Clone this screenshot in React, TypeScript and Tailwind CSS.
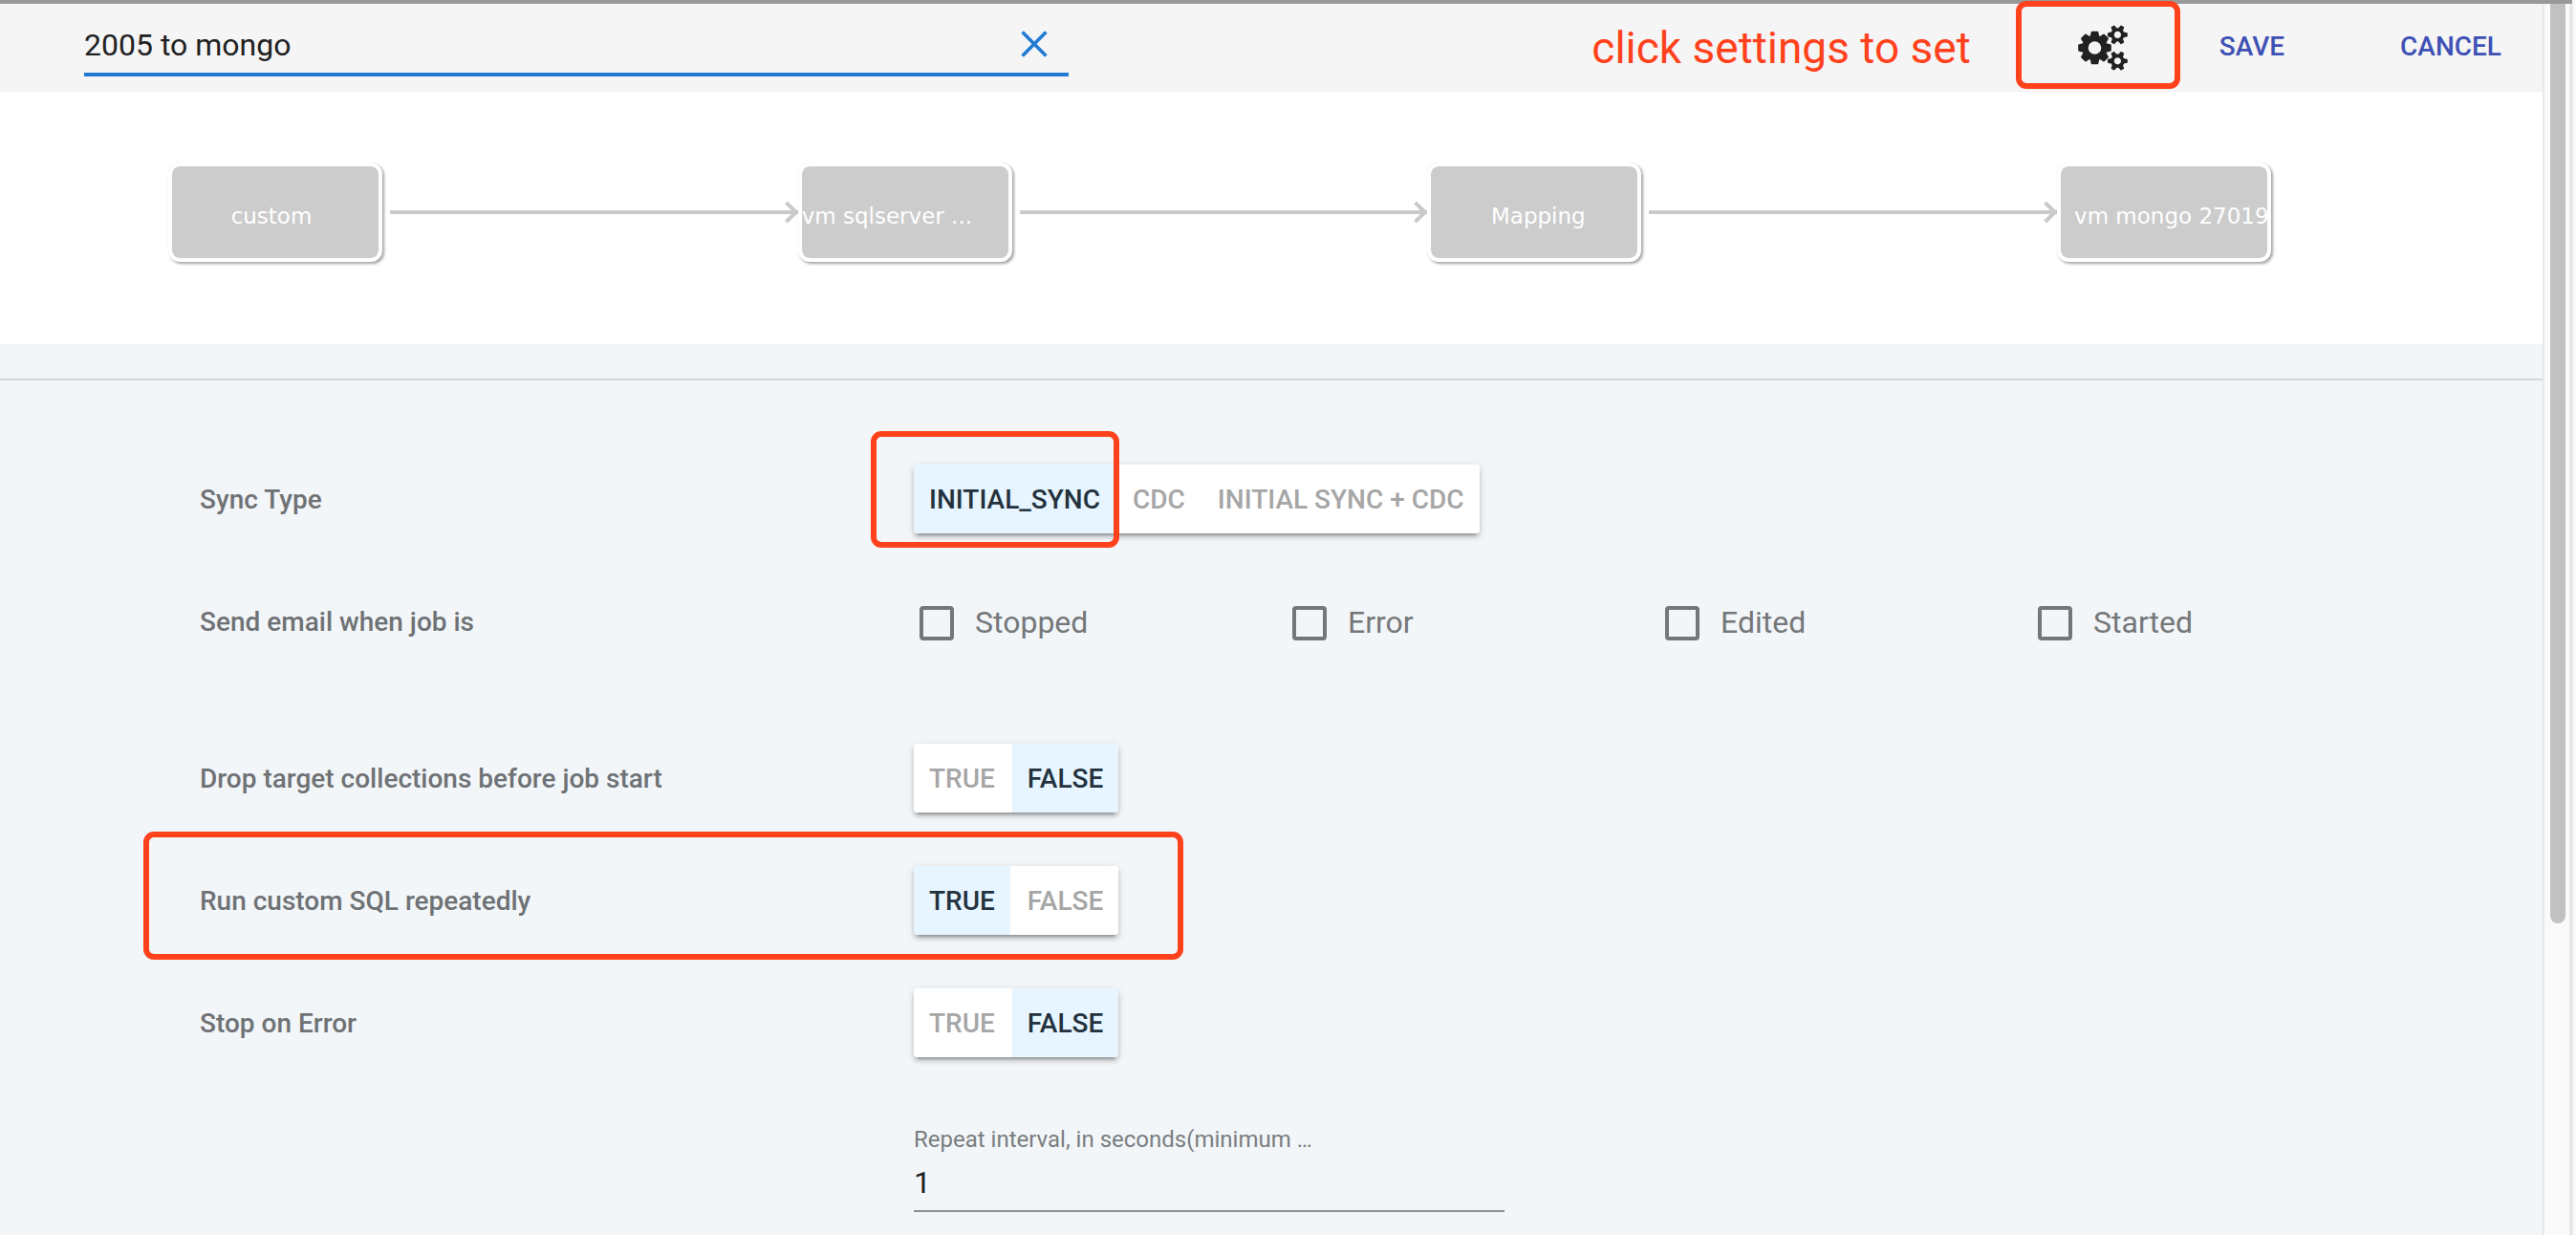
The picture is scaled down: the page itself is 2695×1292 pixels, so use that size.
import { useState } from "react";
import type { ReactNode } from "react";

type FlowNode = { label: string; align: string };

const NODES: FlowNode[] = [
  { label: "custom", align: "pr-2 text-center" },
  { label: "vm sqlserver ...", align: "text-left" },
  { label: "Mapping", align: "pl-2 text-center" },
  { label: "vm mongo 27019", align: "pl-3.5 text-left" },
];

const EMAIL_EVENTS = ["Stopped", "Error", "Edited", "Started"];

const BIG_TEETH = [0, 45, 90, 135, 180, 225, 270, 315];
const SMALL_TEETH = [30, 90, 150, 210, 270, 330];

function GearsIcon() {
  return (
    <svg viewBox="0 0 52 48" className="h-12 w-[52px]" fill="#212121" aria-hidden="true">
      <g transform="translate(17.5 24)">
        {BIG_TEETH.map((a) => (
          <path
            key={a}
            transform={`rotate(${a})`}
            d="M-5 -11 L-3.8 -16.4 Q-3.5 -17.3 -2.6 -17.3 H2.6 Q3.5 -17.3 3.8 -16.4 L5 -11 Z"
          />
        ))}
        <circle r="10" fill="none" stroke="#212121" strokeWidth="6.4" />
      </g>
      {[10.4, 37.8].map((cy) => (
        <g key={cy} transform={`translate(41.4 ${cy})`}>
          {SMALL_TEETH.map((a) => (
            <path
              key={a}
              transform={`rotate(${a})`}
              d="M-2.8 -6 L-2.1 -9.8 Q-2 -10.4 -1.4 -10.4 H1.4 Q2 -10.4 2.1 -9.8 L2.8 -6 Z"
            />
          ))}
          <circle r="5.4" fill="none" stroke="#212121" strokeWidth="3.6" />
        </g>
      ))}
    </svg>
  );
}

function Highlight({ className }: { className: string }) {
  return (
    <span
      aria-hidden="true"
      className={`pointer-events-none absolute z-10 rounded-[11px] border-6 border-[#ff421c] ${className}`}
    />
  );
}

function Connector() {
  return (
    <div className="flex flex-1 items-center pl-2">
      <div className="h-1 flex-1 bg-[#cacaca]" />
      <svg viewBox="0 0 12 24" className="-ml-3 h-6 w-3 overflow-visible" fill="none" stroke="#cacaca" strokeWidth="4" aria-hidden="true">
        <path d="M-0.5 2 L10 12 L-0.5 22" />
      </svg>
    </div>
  );
}

function Toggle({
  label,
  options,
  initial,
  highlightFirst = false,
}: {
  label: string;
  options: string[];
  initial: string;
  highlightFirst?: boolean;
}) {
  const [value, setValue] = useState(initial);
  return (
    <div
      role="group"
      aria-label={label}
      className="flex h-18 w-fit gap-0.5 rounded bg-white shadow-[0_6px_2px_-4px_rgba(0,0,0,0.2),0_4px_4px_rgba(0,0,0,0.16),0_2px_10px_rgba(0,0,0,0.12)]"
    >
      {options.map((option, i) => (
        <div key={option} className="relative flex">
          <button
            type="button"
            aria-pressed={option === value}
            onClick={() => setValue(option)}
            className={`px-4 pt-0.5 text-[28px] font-medium ${i === 0 ? "rounded-l" : ""} ${
              i === options.length - 1 ? "rounded-r" : ""
            } ${option === value ? "bg-[#e6f5ff] text-[#24323d]" : "bg-white text-[#a6a6a6]"}`}
          >
            {option}
          </button>
          {highlightFirst && i === 0 && <Highlight className="-top-[35px] -right-1 -bottom-[15px] -left-[45px]" />}
        </div>
      ))}
    </div>
  );
}

function Row({ label, children }: { label: string; children: ReactNode }) {
  return (
    <div className="grid min-h-18 grid-cols-[minmax(0,83fr)_minmax(0,174fr)] items-center">
      <span className="pt-0.5 text-[28px] font-medium text-[#6f7275]">{label}</span>
      {children}
    </div>
  );
}

export default function App() {
  const [name, setName] = useState("2005 to mongo");
  const [interval, setIntervalValue] = useState("1");

  return (
    <div className="flex min-h-screen flex-col bg-[#fafafa] font-['Roboto',sans-serif]">
      <div className="mr-1 h-1 bg-[#999999]" />
      <div className="flex flex-1">
        <main className="flex min-w-0 flex-1 flex-col bg-[#f2f6f9]">
          <header className="flex h-23 items-center bg-[#f5f5f5] pr-[43px] pl-22">
            <div className="mb-4 flex h-[62px] w-[1030px] shrink items-center self-end border-b-4 border-[#217bd4] pr-[22px]">
              <input
                aria-label="Job name"
                value={name}
                onChange={(e) => setName(e.target.value)}
                className="min-w-0 flex-1 bg-transparent text-[32px] text-[#212121] outline-none"
              />
              <button type="button" aria-label="Clear name" className="pb-0.5" onClick={() => setName("")}>
                <svg viewBox="0 0 28 28" className="size-7" fill="none" stroke="#217bd4" strokeWidth="3.6" aria-hidden="true">
                  <path d="M1.6 1.6 L26.4 26.4 M26.4 1.6 L1.6 26.4" />
                </svg>
              </button>
            </div>
            <span className="ml-auto text-[46px] leading-none whitespace-nowrap text-[#ff421c]">click settings to set</span>
            <div className="relative ml-28 shrink-0">
              <button type="button" aria-label="Settings" className="block">
                <GearsIcon />
              </button>
              <Highlight className="-top-[25px] -right-[55px] -bottom-[19px] -left-[65px]" />
            </div>
            <div className="ml-24 flex gap-[121px] pb-0.5 text-[28px] font-medium text-[#3f51b5]">
              <button type="button">SAVE</button>
              <button type="button">CANCEL</button>
            </div>
          </header>

          <section aria-label="Job flow" className="flex h-66 bg-white pt-[74px] pr-71 pb-[86px] pl-44">
            {NODES.map((node, i) => (
              <div key={node.label} className={i === 0 ? "flex" : "flex flex-1"}>
                {i > 0 && <Connector />}
                <div className="flex w-56 items-center overflow-hidden rounded-xl border-4 border-white bg-[#cccccc] bg-clip-padding pt-2 font-['DejaVu_Sans',sans-serif] text-[23px] text-white shadow-[2px_2px_3px_rgba(0,0,0,0.35),0_0_1px_rgba(0,0,0,0.15)]">
                  <span className={`flex-1 whitespace-nowrap ${node.align}`}>{node.label}</span>
                </div>
              </div>
            ))}
          </section>

          <form className="mt-9 border-t-2 border-[#d3d7da] pt-22 pr-[138px] pl-[209px]" onSubmit={(e) => e.preventDefault()}>
            <Row label="Sync Type">
              <Toggle label="Sync Type" options={["INITIAL_SYNC", "CDC", "INITIAL SYNC + CDC"]} initial="INITIAL_SYNC" highlightFirst />
            </Row>

            <div className="mt-14">
              <Row label="Send email when job is">
                <div className="grid grid-cols-4 pt-1 pl-1.5">
                  {EMAIL_EVENTS.map((event) => (
                    <label key={event} className="flex items-center gap-[22px] text-[32px] leading-9 text-[#757779]">
                      <input
                        type="checkbox"
                        className="size-9 appearance-none rounded border-4 border-[#747678] checked:bg-[#747678]"
                      />
                      <span className="pb-0.5">{event}</span>
                    </label>
                  ))}
                </div>
              </Row>
            </div>

            <div className="mt-23 flex flex-col gap-14">
              <Row label="Drop target collections before job start">
                <Toggle label="Drop target collections before job start" options={["TRUE", "FALSE"]} initial="FALSE" />
              </Row>
              <div className="relative">
                <Row label="Run custom SQL repeatedly">
                  <Toggle label="Run custom SQL repeatedly" options={["TRUE", "FALSE"]} initial="TRUE" />
                </Row>
                <Highlight className="-top-9 -bottom-[26px] -left-[59px] w-[1088px]" />
              </div>
              <Row label="Stop on Error">
                <Toggle label="Stop on Error" options={["TRUE", "FALSE"]} initial="FALSE" />
              </Row>
            </div>

            <div className="mt-18 grid grid-cols-[minmax(0,83fr)_minmax(0,174fr)]">
              <div className="col-start-2 flex w-[618px] flex-col gap-0.5">
                <label htmlFor="repeat-interval" className="text-2xl leading-7 text-[#7a7d80]">
                  Repeat interval, in seconds(minimum …
                </label>
                <input
                  id="repeat-interval"
                  value={interval}
                  onChange={(e) => setIntervalValue(e.target.value)}
                  className="h-15 border-b-2 border-[#8d9093] bg-transparent text-[32px] text-[#212121] outline-none"
                />
              </div>
            </div>
          </form>
        </main>

        <div aria-hidden="true" className="flex w-8 justify-end border-l-2 border-[#e8e8e8]">
          <div className="mr-1 h-[74.7%] w-4 self-start rounded-b-full bg-[#c1c1c1]" />
          <div className="w-1 bg-[#e8e8e8]" />
        </div>
        <div className="w-[3px]" />
      </div>
    </div>
  );
}
